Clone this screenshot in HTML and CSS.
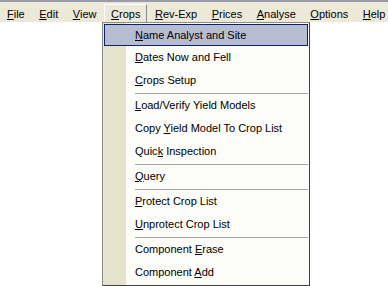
FILE: index.html
```html
<!DOCTYPE html>
<html lang="en">
<head>
    <meta charset="UTF-8">
    <title>Crops Menu</title>
    <link rel="stylesheet" href="styles.css">
</head>
<body>

    <div class="menubar">
        <span class="bar-item"><u>F</u>ile</span>
        <span class="bar-item"><u>E</u>dit</span>
        <span class="bar-item"><u>V</u>iew</span>
        <span class="bar-item open"><u>C</u>rops</span>
        <span class="bar-item"><u>R</u>ev-Exp</span>
        <span class="bar-item"><u>P</u>rices</span>
        <span class="bar-item"><u>A</u>nalyse</span>
        <span class="bar-item"><u>O</u>ptions</span>
        <span class="bar-item"><u>H</u>elp</span>
    </div>

    <div class="dropdown">
        <div class="menu-item selected"><u>N</u>ame Analyst and Site</div>
        <div class="menu-item"><u>D</u>ates Now and Fell</div>
        <div class="menu-item"><u>C</u>rops Setup</div>
        <div class="separator"></div>
        <div class="menu-item"><u>L</u>oad/Verify Yield Models</div>
        <div class="menu-item">Copy <u>Y</u>ield Model To Crop List</div>
        <div class="menu-item">Quic<u>k</u> Inspection</div>
        <div class="separator"></div>
        <div class="menu-item"><u>Q</u>uery</div>
        <div class="separator"></div>
        <div class="menu-item"><u>P</u>rotect Crop List</div>
        <div class="menu-item"><u>U</u>nprotect Crop List</div>
        <div class="separator"></div>
        <div class="menu-item">Component <u>E</u>rase</div>
        <div class="menu-item">Component <u>A</u>dd</div>
    </div>

</body>
</html>
```

FILE: styles.css
```css
body {
    margin: 0;
    background-color: #ffffff;
    font-family: "Liberation Sans", Arial, sans-serif;
    font-size: 11px;
    color: #000000;
}

u {
    text-decoration: underline;
    text-underline-offset: 1px;
}

.menubar {
    display: flex;
    gap: 0.5px;
    height: 20px;
    border-top: 2px solid #9a9aae;
    background-color: #ece9d8;
    overflow: hidden;
}

.bar-item {
    display: flex;
    align-items: center;
    flex-shrink: 0;
    white-space: nowrap;
    padding: 3px 6px 0 6px;
    border: 1px solid transparent;
    border-bottom: none;
}

.bar-item.open {
    margin-top: 2px;
    padding-top: 1px;
    border-color: #ffffff #8d8d8d #8d8d8d #ffffff;
}

.dropdown {
    width: 204px;
    margin-left: 102px;
    border: 1px solid #8d8d8d;
    border-right-color: #404040;
    border-bottom-color: #404040;
    padding: 1px;
    background: linear-gradient(to right, #e6e2cc 0, #e6e2cc 23px, #fcfcf8 23px);
}

.menu-item {
    height: 23px;
    line-height: 23px;
    padding-left: 31px;
    white-space: nowrap;
}

.menu-item.selected {
    height: 20px;
    line-height: 20px;
    padding-left: 30px;
    background-color: #b6bdd2;
    border: 1px solid #0a246a;
}

.separator {
    height: 0;
    margin: 1px 0 0 31px;
    border-top: 1px solid #a6a6a6;
}
```
